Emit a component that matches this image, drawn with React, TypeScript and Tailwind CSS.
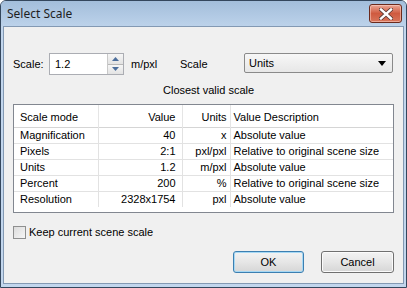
const rows = [
  { mode: 'Magnification', value: '40', units: 'x', desc: 'Absolute value' },
  { mode: 'Pixels', value: '2:1', units: 'pxl/pxl', desc: 'Relative to original scene size' },
  { mode: 'Units', value: '1.2', units: 'm/pxl', desc: 'Absolute value' },
  { mode: 'Percent', value: '200', units: '%', desc: 'Relative to original scene size' },
  { mode: 'Resolution', value: '2328x1754', units: 'pxl', desc: 'Absolute value' },
];

function CloseButton() {
  return (
    <div className="ml-auto mr-[4px] w-[33px] h-[19px] rounded-[3px] border border-[#6b2a1c] bg-gradient-to-b from-[#eaa594] via-[#cf5a3f] to-[#d8755b] flex items-center justify-center shadow-[inset_0_0_0_1px_rgba(255,220,210,0.5)]">
      <svg width="14" height="12" viewBox="0 0 14 12">
        <path d="M2 1.5 L12 10.5 M12 1.5 L2 10.5" stroke="#5a3a34" strokeWidth="4" strokeLinecap="square" />
        <path d="M2 1.5 L12 10.5 M12 1.5 L2 10.5" stroke="#ffffff" strokeWidth="2.4" strokeLinecap="square" />
      </svg>
    </div>
  );
}

function WinButton({ label, primary }: { label: string; primary?: boolean }) {
  return (
    <div
      className={
        'h-[22px] rounded-[3px] border flex items-center justify-center bg-gradient-to-b from-[#f3f3f3] via-[#e6e6e6] to-[#d6d6d6] ' +
        (primary
          ? 'w-[71px] border-[#3c7fb1] shadow-[inset_0_0_0_1px_#a6d8f4]'
          : 'w-[73px] border-[#707070] shadow-[inset_0_0_0_1px_#fbfbfb]')
      }
    >
      {label}
    </div>
  );
}

export default function App() {
  return (
    <div
      className="w-[407px] h-[288px] bg-white text-[11px] text-black"
      style={{ fontFamily: '"Liberation Sans", Arial, sans-serif' }}
    >
      <div className="w-[407px] h-[288px] flex flex-col rounded-t-[6px] border border-[#34475d] bg-[#c2d6ed] overflow-hidden">
        {/* title bar */}
        <div className="h-[25px] flex items-center pl-[6px] bg-gradient-to-b from-[#a3bedb] to-[#bcd2ea]">
          <span className="text-[12px] text-[#1e1e1e]" style={{ fontFamily: '"Noto Sans", sans-serif' }}>
            Select Scale
          </span>
          <CloseButton />
        </div>

        {/* client area */}
        <div className="flex-1 mx-[2px] mb-[3px] border border-[#8399b3] bg-[#f0f0f0] px-[9px] pt-[26px] flex flex-col">
          <div className="flex items-center h-[22px]">
            <span className="w-[36px]">Scale:</span>
            <div className="w-[75px] h-[22px] border border-[#abadb3] bg-white flex">
              <span className="flex-1 pl-[5px] leading-[20px]">1.2</span>
              <div className="w-[16px] flex flex-col border-l border-[#c9c9c9]">
                <div className="flex-1 flex items-center justify-center bg-gradient-to-b from-[#f6f6f6] to-[#e3e3e3] border-b border-[#b8b8b8]">
                  <svg width="7" height="4" viewBox="0 0 7 4"><path d="M0 4 L3.5 0 L7 4 Z" fill="#4c6e9c" /></svg>
                </div>
                <div className="flex-1 flex items-center justify-center bg-gradient-to-b from-[#f6f6f6] to-[#e3e3e3]">
                  <svg width="7" height="4" viewBox="0 0 7 4"><path d="M0 0 L7 0 L3.5 4 Z" fill="#4c6e9c" /></svg>
                </div>
              </div>
            </div>
            <span className="ml-[7px] w-[49px]">m/pxl</span>
            <span className="w-[64px]">Scale</span>
            <div className="self-start w-[149px] h-[20px] rounded-[2px] border border-[#8a8a8a] bg-gradient-to-b from-[#f7f7f7] to-[#e7e7e7] flex items-center pl-[4px] pr-[6px]">
              <span className="flex-1">Units</span>
              <svg width="8" height="5" viewBox="0 0 8 5"><path d="M0 0 L8 0 L4 5 Z" fill="#000" /></svg>
            </div>
          </div>

          <div className="mt-[9px] h-[13px] leading-[13px] pl-[150px]">Closest valid scale</div>

          <div className="mt-[7px] h-[109px] border border-[#828790] bg-white">
            <table className="w-full table-fixed border-collapse leading-[13px]">
              <colgroup>
                <col className="w-[84px]" />
                <col className="w-[84px]" />
                <col className="w-[48px]" />
                <col />
              </colgroup>
              <thead>
                <tr className="h-[22px] border-b border-[#d5d5d5]">
                  <th className="font-normal text-left pl-[6px] pt-[3px] border-r border-[#e5e5e5]">Scale mode</th>
                  <th className="font-normal text-right pr-[6px] pt-[3px] border-r border-[#e5e5e5]">Value</th>
                  <th className="font-normal text-right pr-[3px] pt-[3px] border-r border-[#e5e5e5]">Units</th>
                  <th className="font-normal text-left pl-[3px] pt-[3px]">Value Description</th>
                </tr>
              </thead>
              <tbody>
                {rows.map((r) => (
                  <tr key={r.mode} className="h-[16px] border-b border-[#e2e2e2] last:border-b-0">
                    <td className="pl-[6px] border-r border-[#e2e2e2]">{r.mode}</td>
                    <td className="text-right pr-[6px] border-r border-[#e2e2e2]">{r.value}</td>
                    <td className="text-right pr-[3px] border-r border-[#e2e2e2]">{r.units}</td>
                    <td className="pl-[3px] whitespace-nowrap">{r.desc}</td>
                  </tr>
                ))}
              </tbody>
            </table>
          </div>

          <div className="mt-[13px] flex items-center h-[13px]">
            <div className="w-[13px] h-[13px] border border-[#8e8f8f] bg-gradient-to-br from-[#dcdcdc] to-[#f6f6f6]" />
            <span className="ml-[3px]">Keep current scene scale</span>
          </div>

          <div className="mt-[12px] flex justify-end gap-[17px]">
            <WinButton label="OK" primary />
            <WinButton label="Cancel" />
          </div>
        </div>
      </div>
    </div>
  );
}
